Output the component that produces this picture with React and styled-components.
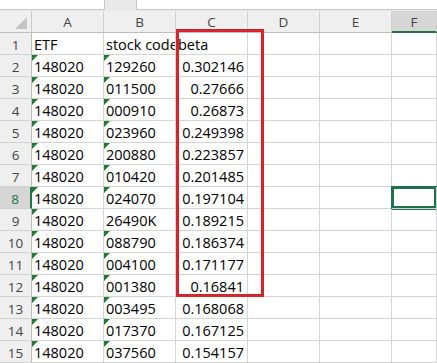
import React from "react";
import styled, { createGlobalStyle } from "styled-components";

const columns = ["A", "B", "C", "D", "E", "F"];
const widths = [72, 72, 72, 72, 72, 45];

const rows = [
  ["148020", "129260", "0.302146"],
  ["148020", "011500", "0.27666"],
  ["148020", "000910", "0.26873"],
  ["148020", "023960", "0.249398"],
  ["148020", "200880", "0.223857"],
  ["148020", "010420", "0.201485"],
  ["148020", "024070", "0.197104"],
  ["148020", "26490K", "0.189215"],
  ["148020", "088790", "0.186374"],
  ["148020", "004100", "0.171177"],
  ["148020", "001380", "0.16841"],
  ["148020", "003495", "0.168068"],
  ["148020", "017370", "0.167125"],
  ["148020", "037560", "0.154157"],
];

const SELECTED_ROW = 8;

const App = () => (
  <>
    <GlobalStyle />
    <Sheet>
      <TopStrip>
        <NameBox />
        <FormulaBox />
      </TopStrip>

      <HeaderRow>
        <Corner>
          <CornerTriangle />
        </Corner>
        {columns.map((c, i) => (
          <ColHead key={c} w={widths[i]} selected={c === "F"}>
            {c}
          </ColHead>
        ))}
      </HeaderRow>

      <Row>
        <RowHead>1</RowHead>
        <Cell w={widths[0]}>ETF</Cell>
        <Cell w={widths[1]}>stock code</Cell>
        <Cell w={widths[2]}>beta</Cell>
        <Cell w={widths[3]} />
        <Cell w={widths[4]} />
        <Cell w={widths[5]} />
      </Row>

      {rows.map((r, i) => {
        const n = i + 2;
        return (
          <Row key={n}>
            <RowHead selected={n === SELECTED_ROW}>{n}</RowHead>
            <Cell w={widths[0]} flag>
              {r[0]}
            </Cell>
            <Cell w={widths[1]} flag={/^\d+$/.test(r[1])}>
              {r[1]}
            </Cell>
            <Cell w={widths[2]} num>
              {r[2]}
            </Cell>
            <Cell w={widths[3]} />
            <Cell w={widths[4]} />
            <Cell w={widths[5]} active={n === SELECTED_ROW} />
          </Row>
        );
      })}

      <Highlight />
    </Sheet>
  </>
);

export default App;

// --- styles ---

const GlobalStyle = createGlobalStyle`
  html, body {
    margin: 0;
    padding: 0;
    background: #ffffff;
    overflow: hidden;
  }
  body {
    font-family: "Open Sans", "Noto Sans", sans-serif;
  }
`;

const Sheet = styled.div`
  position: relative;
  width: 437px;
  height: 363px;
  overflow: hidden;
  background: #ffffff;
`;

const TopStrip = styled.div`
  display: flex;
  height: 11px;
  background: #e9e9e9;
  gap: 31px;
`;

const NameBox = styled.div`
  width: 104px;
  height: 9px;
  background: #ffffff;
  border-bottom: 1px solid #c9c9c9;
  border-right: 1px solid #c9c9c9;
  box-sizing: content-box;
`;

const FormulaBox = styled.div`
  flex: 1;
  height: 9px;
  background: #ffffff;
  border-bottom: 1px solid #c9c9c9;
  border-left: 1px solid #c9c9c9;
`;

const HeaderRow = styled.div`
  display: flex;
  height: 22px;
  background: #efefef;
  border-bottom: 1px solid #bdbdbd;
  box-sizing: border-box;
`;

const Corner = styled.div`
  position: relative;
  width: 32px;
  flex: none;
  border-right: 1px solid #c9c9c9;
  box-sizing: border-box;
`;

const CornerTriangle = styled.div`
  position: absolute;
  right: 4px;
  bottom: 3px;
  width: 0;
  height: 0;
  border-left: 12px solid transparent;
  border-bottom: 12px solid #c4c4c4;
`;

const ColHead = styled.div`
  width: ${(p) => p.w}px;
  flex: none;
  display: flex;
  align-items: center;
  justify-content: center;
  box-sizing: border-box;
  border-right: 1px solid #d2d2d2;
  font-size: 13.5px;
  color: #444444;
  padding-top: 1px;
  background: ${(p) => (p.selected ? "#d6d6d6" : "transparent")};
  border-bottom: ${(p) => (p.selected ? "2px solid #217346" : "none")};
  margin-bottom: ${(p) => (p.selected ? "-1px" : "0")};
`;

const Row = styled.div`
  display: flex;
  height: 22px;
`;

const RowHead = styled.div`
  width: 32px;
  flex: none;
  box-sizing: border-box;
  display: flex;
  align-items: center;
  justify-content: center;
  padding-top: 3px;
  font-size: 13.5px;
  color: ${(p) => (p.selected ? "#217346" : "#444444")};
  background: ${(p) => (p.selected ? "#d6d6d6" : "#efefef")};
  border-bottom: 1px solid #d2d2d2;
  border-right: ${(p) => (p.selected ? "2px solid #217346" : "1px solid #bdbdbd")};
`;

const Cell = styled.div`
  position: relative;
  width: ${(p) => p.w}px;
  flex: none;
  box-sizing: border-box;
  border-right: 1px solid #d4d4d4;
  border-bottom: 1px solid #d4d4d4;
  overflow: hidden;
  white-space: nowrap;
  font-size: 14.5px;
  line-height: 21px;
  padding: 1px 3px 0 2px;
  color: #000000;
  text-align: ${(p) => (p.num ? "right" : "left")};
  ${(p) =>
    p.flag &&
    `
    &::before {
      content: "";
      position: absolute;
      left: 0;
      top: 0;
      border-top: 6px solid #1d7a2f;
      border-right: 6px solid transparent;
    }
  `}
  ${(p) =>
    p.active &&
    `
    box-shadow: 0 0 0 1px #21704a, inset 0 0 0 2px #21704a;
  `}
`;

const Highlight = styled.div`
  position: absolute;
  left: 176px;
  top: 29px;
  width: 88px;
  height: 268px;
  box-sizing: border-box;
  border: 3px solid #d7232b;
  pointer-events: none;
`;
